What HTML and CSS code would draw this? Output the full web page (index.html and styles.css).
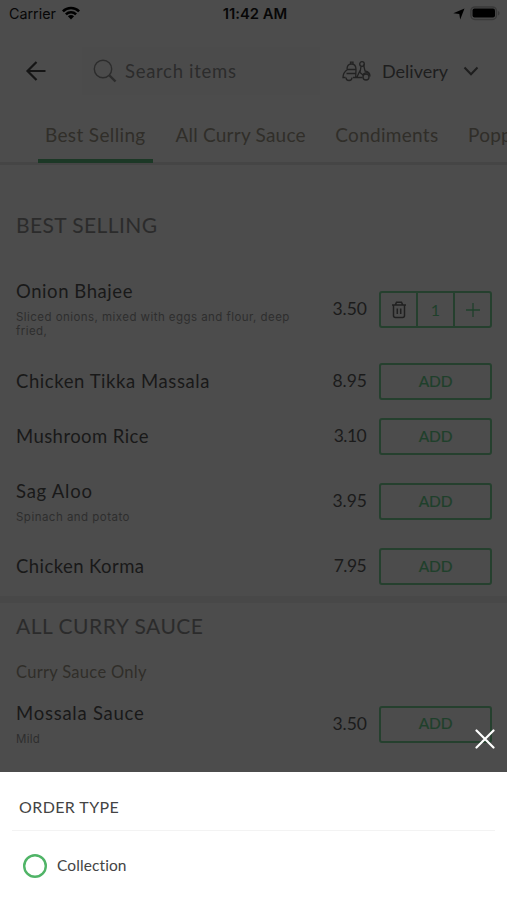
FILE: index.html
```
<!DOCTYPE html>
<html lang="en">
<head>
<meta charset="utf-8">
<title>Menu</title>
<link rel="stylesheet" href="styles.css">
</head>
<body>
<div class="screen">
  <div class="status">
    <div class="carrier"><span class="carrier-name">Carrier</span>
      <svg width="18" height="14" viewBox="0 0 18 14"><path d="M0 4.4A13 13 0 0 1 18 4.4L16.2 6.2A10.4 10.4 0 0 0 1.8 6.2Z"/><path d="M3 7.4A8.7 8.7 0 0 1 15 7.4L13.2 9.2A6.1 6.1 0 0 0 4.8 9.2Z"/><path d="M5.9 10.3A4.6 4.6 0 0 1 12.1 10.3L9 13.4Z"/></svg>
    </div>
    <div class="time">11:42 AM</div>
    <div class="power">
      <svg width="12" height="12" viewBox="0 0 12 12"><path d="M11.5.5L7.2 11.5L6.3 6L.3 5.2Z"/></svg>
      <svg width="31" height="15" viewBox="0 0 31 15"><rect x=".9" y=".9" width="25.500" height="12.6" rx="4" fill="none" stroke="#393939" stroke-width="1.500"/><rect x="2.5" y="2.5" width="22.500" height="9" rx="2"/><path d="M28 5v4.500c2-.8 2-3.700 0-4.500z" fill="#393939"/></svg>
    </div>
  </div>
  <header class="header">
    <svg class="back" width="22" height="22" viewBox="0 0 22 22"><path d="M20.500 11H2.500M11.500 2L2.500 11l9 9"/></svg>
    <div class="search">
      <svg width="24" height="24" viewBox="0 0 24 24"><circle cx="10" cy="10" r="8.700"/><path class="handle" d="M16.500 16.500L22.500 22.500"/></svg>
      <span>Search items</span>
    </div>
    <div class="mode">
      <svg class="scooter" width="29" height="22" viewBox="0 0 29 22"><path d="M5 9.500C5 5.500 6.500 4 9.500 4S14 5.500 14 9.500M4.500 9.500h10M8.500 4V2.200h2.500V4M5.500 9.500C2.500 11.500 1 14 1 17.500h2.500M14 9.500l-.3 8M4.500 13.500h9M11 17.500h9.500M15 17l3-6.500M19 6.500l-1 6 3 2.500M21.500 4.500l1.500 6.500c3 .5 5 2.500 5 5.500M20.500 15.500c1.500-3 4-3.500 6.500-2"/><circle cx="20" cy="4" r="2.300"/><path d="M4 17.500a3 3 0 0 0 6 0M21 17a3 3 0 1 0 6 0 3 3 0 1 0-6 0"/></svg>
      <span class="mode-name">Delivery</span>
      <svg class="chev" width="16" height="10" viewBox="0 0 16 10"><path d="M1.500 1.500L8 8.300l6.500-6.800"/></svg>
    </div>
  </header>
  <nav class="tabs">
    <div class="tab active"><span class="t1">Best Selling</span></div>
    <div class="tab"><span class="t2">All Curry Sauce</span></div>
    <div class="tab"><span class="t3">Condiments</span></div>
    <div class="tab"><span class="t4">Poppadoms</span></div>
  </nav>
  <main class="menu">
    <h2 class="heading first"><span>BEST SELLING</span></h2>
    <div class="item onion">
      <div class="info"><div class="name"><span>Onion Bhajee</span></div><div class="desc">Sliced onions, mixed with eggs and flour, deep fried,</div></div>
      <div class="price">3.50</div>
      <div class="stepper">
        <div class="cell"><svg class="trash" width="16" height="18" viewBox="0 0 16 18"><path d="M1 4h14M4.500 3.500L5.500 1.200h5l1 2.300M2.500 4v10.500q0 2 2 2h7q2 0 2-2V4M6.300 7.500v5.500M9.700 7.500v5.500"/></svg></div>
        <div class="cell">1</div>
        <div class="cell"><svg class="plus" width="14" height="14" viewBox="0 0 14 14"><path d="M7 0v14M0 7h14"/></svg></div>
      </div>
    </div>
    <div class="item"><div class="info"><div class="name"><span>Chicken Tikka Massala</span></div></div><div class="price">8.95</div><div class="add">ADD</div></div>
    <div class="item"><div class="info"><div class="name snug"><span>Mushroom Rice</span></div></div><div class="price tight">3.10</div><div class="add">ADD</div></div>
    <div class="item tall"><div class="info"><div class="name wide"><span>Sag Aloo</span></div><div class="desc">Spinach and potato</div></div><div class="price">3.95</div><div class="add">ADD</div></div>
    <div class="item"><div class="info"><div class="name snug"><span>Chicken Korma</span></div></div><div class="price tight">7.95</div><div class="add">ADD</div></div>
    <div class="band"></div>
    <h2 class="heading second"><span>ALL CURRY SAUCE</span></h2>
    <div class="sub"><span>Curry Sauce Only</span></div>
    <div class="item mossala"><div class="info"><div class="name wide"><span>Mossala Sauce</span></div><div class="desc mild">Mild</div></div><div class="price">3.50</div><div class="add">ADD</div></div>
  </main>
  <svg class="close" width="20" height="20" viewBox="0 0 20 20"><path d="M1.500 1.500l17 17M18.500 1.500l-17 17"/></svg>
  <section class="sheet">
    <div class="sheet-title"><span>ORDER TYPE</span></div>
    <div class="option"><svg class="radio" width="24" height="24" viewBox="0 0 24 24"><circle cx="12" cy="12" r="10.800"/></svg><span>Collection</span></div>
  </section>
</div>
</body>
</html>
```
FILE: styles.css
```
* { box-sizing: border-box; }
body { margin: 0; font-family: Lato, "Liberation Sans", sans-serif; font-variant-ligatures: none; background: #4c4c4c; }
svg { display: block; flex: none; }
.screen { position: relative; width: 507px; height: 900px; overflow: hidden; display: flex; flex-direction: column; background: #4c4c4c; color: #191919; white-space: nowrap; }
.status { height: 27px; flex: none; display: grid; grid-template-columns: 1fr auto 1fr; align-items: center; padding: 0 6px 0 9px; font-family: Inter, sans-serif; font-size: 14.300px; color: #070707; }
.carrier { display: flex; align-items: center; gap: 6px; }
.carrier svg { margin-top: -2px; }
.time { font-weight: 600; font-size: 14.800px; }
.power { display: flex; justify-content: flex-end; align-items: center; gap: 5px; }
.header { height: 88px; flex: none; display: flex; align-items: center; padding-left: 25px; }
.header span { margin-top: -1px; }
.back { fill: none; stroke: #151515; stroke-width: 2.200; }
.search { margin-left: 35px; width: 238px; height: 48px; padding-left: 11px; display: flex; align-items: center; gap: 8px; background: #4b4b4b; font-size: 18.500px; letter-spacing: .7px; color: #2c2c2c; }
.search svg { fill: none; stroke: #2c2c2c; stroke-width: 1.400; }
.search .handle { stroke-width: 2.400; }
.mode { margin-left: 22px; display: flex; align-items: center; font-size: 18px; color: #1e1e1e; }
.scooter { fill: none; stroke: #222; stroke-width: 1.300; }
.mode-name { margin-left: 11px; width: 67px; }
.chev { margin-left: 14px; fill: none; stroke: #1e1e1e; stroke-width: 2; }
.tabs { height: 50px; flex: none; display: flex; padding-left: 38px; border-bottom: 3px solid #454545; font-size: 19px; color: #302e29; }
.tab { flex: none; height: 47px; padding: 8px 7px 0; line-height: 23px; margin-right: 15.500px; letter-spacing: .22px; }
.tab.active { width: 115px; height: 48px; border-bottom: 4px solid #1c3826; letter-spacing: .35px; }
.t3 { letter-spacing: .3px; }
.menu { flex: none; height: 607px; }
.heading { margin: 0; padding-left: 16px; font-weight: 400; font-size: 21px; line-height: 26px; letter-spacing: .4px; color: #2b2b2b; }
.first { padding-top: 47px; height: 111px; }
.second { padding-top: 10px; height: 56px; letter-spacing: .5px; }
.item { height: 55px; padding: 0 15px 0 16px; display: flex; align-items: center; }
.info, .price { position: relative; top: -1px; }
.onion { height: 78px; padding-bottom: 11px; }
.onion .info { padding-top: 1px; }
.onion .name { margin-top: -2px; }
.tall { height: 75px; }
.tall .info { padding-top: 1px; }
.info { width: 290px; }
.name { font-size: 18.500px; line-height: 24px; letter-spacing: .57px; color: #191919; }
.name.snug { letter-spacing: .43px; }
.name.wide { letter-spacing: .75px; }
.desc { margin-top: 7px; font-family: Inter, sans-serif; font-size: 11.500px; line-height: 14px; letter-spacing: .48px; color: #2e2e2e; white-space: normal; }
.onion .desc { letter-spacing: .45px; }
.mild { letter-spacing: .3px; }
.price { width: 61px; text-align: right; font-size: 17.500px; color: #1b1b1b; }
.price.tight { letter-spacing: -.6px; padding-right: 1px; }
.add, .stepper { margin-left: auto; width: 113px; height: 37px; border: 2px solid #25402e; border-radius: 3px; }
.add { display: flex; align-items: center; justify-content: center; padding-bottom: 2px; font-size: 15.500px; letter-spacing: -.2px; color: #1f402b; -webkit-text-stroke: .2px #1f402b; }
.stepper { display: flex; }
.cell { flex: 1; display: flex; align-items: center; justify-content: center; font-size: 16px; color: #1f402b; }
.cell + .cell { border-left: 2px solid #25402e; }
.trash { fill: none; stroke: #202020; stroke-width: 1.500; }
.plus { fill: none; stroke: #1f402b; stroke-width: 1.300; }
.band { height: 7px; margin-top: 2px; background: #484848; }
.sub { height: 30px; padding-left: 16px; line-height: 27px; font-size: 16.500px; letter-spacing: .3px; color: #302e29; }
.mossala { height: 70px; }
.close { position: absolute; left: 475px; top: 729px; fill: none; stroke: #fff; stroke-width: 2.200; stroke-linecap: round; }
.sheet { flex: none; height: 128px; padding: 0 12px; background: #fff; color: #444; }
.sheet-title { height: 59px; padding: 21px 7px 0; border-bottom: 1px solid #f3f3f3; font-size: 16px; letter-spacing: .4px; line-height: 27px; }
.option { height: 69px; padding-left: 11px; display: flex; align-items: center; gap: 10px; font-size: 15.500px; letter-spacing: .1px; }
.option span { margin-top: -2px; }
.radio { fill: none; stroke: #50b467; stroke-width: 2.400; }
```
